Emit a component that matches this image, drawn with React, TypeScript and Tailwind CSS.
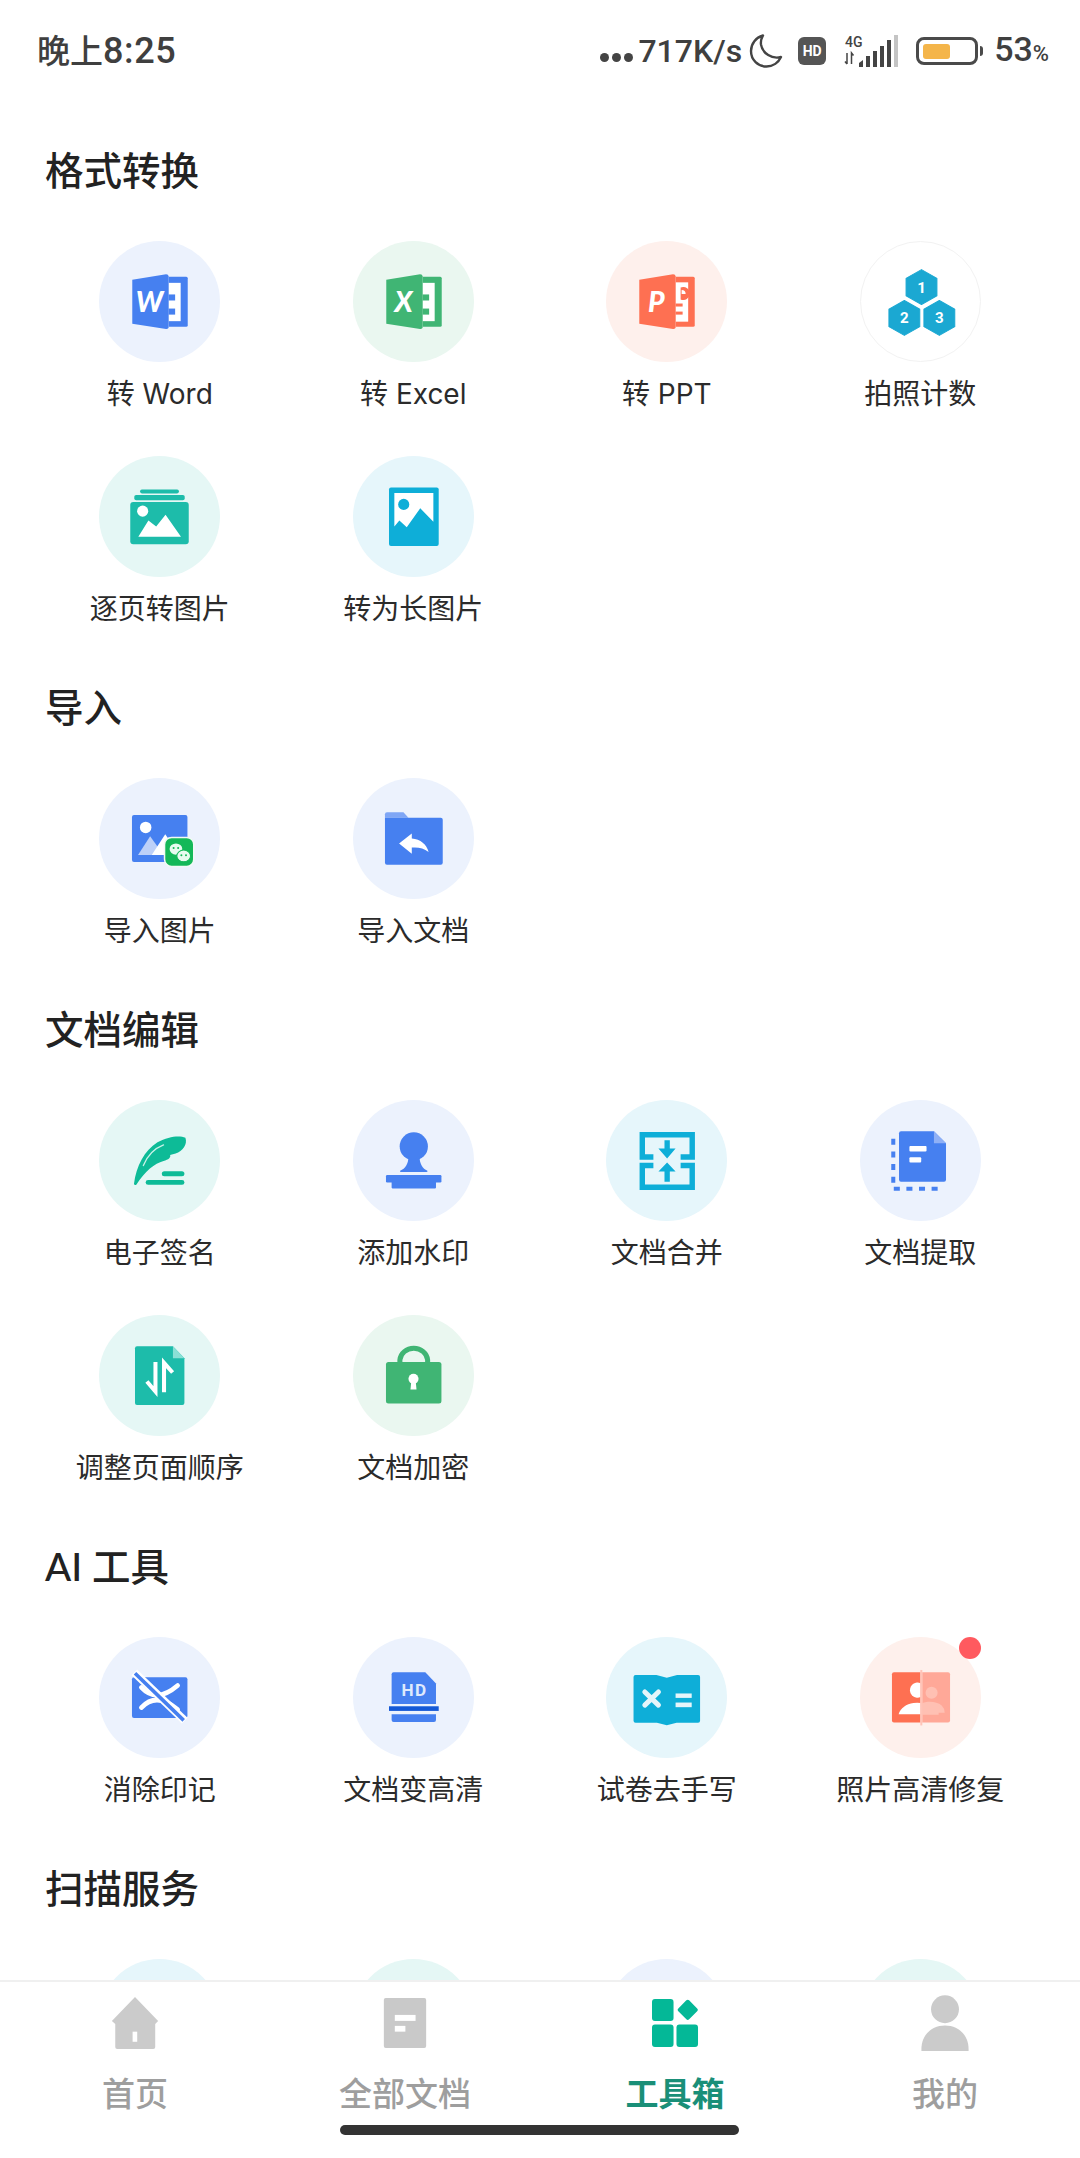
import type { ReactNode } from "react";

const BLUE = "#4680f0";
const GREEN = "#40b574";
const ORANGE = "#fe7052";
const TEAL = "#1dbcaa";
const CYAN = "#0eaed8";
const LOGO_FONT = "Lato, Liberation Sans, sans-serif";

function Icon({ children }: { children?: ReactNode }) {
    return (
        <svg viewBox="0 0 120 120" className="h-[121px] w-[121px]">
            {children}
        </svg>
    );
}

function OfficeBook({ color, letter, pages }: { color: string; letter: string; pages: ReactNode }) {
    return (
        <Icon>
            <path d="M69 35.5H86.5Q88 35.5 88 37V83.5Q88 85 86.5 85H69Z" fill={color} />
            {pages}
            <path d="M33 38.5L66.5 33Q69 33 69 35V85.5Q69 87.5 66.5 87.3L33 82Z" fill={color} />
            <text x="50" y="70" textAnchor="middle" fontFamily={LOGO_FONT} fontSize="28" fontWeight="900" fontStyle="italic" fill="#fff">
                {letter}
            </text>
        </Icon>
    );
}

function RulePages({ color }: { color: string }) {
    return (
        <>
            <rect x="69" y="41.5" width="12" height="38" fill="#fff" />
            <rect x="69" y="53" width="6.5" height="6" fill={color} />
            <rect x="69" y="67" width="6.5" height="6" fill={color} />
        </>
    );
}

const WordIcon = () => <OfficeBook color={BLUE} letter="W" pages={<RulePages color={BLUE} />} />;
const ExcelIcon = () => <OfficeBook color={GREEN} letter="X" pages={<RulePages color={GREEN} />} />;
const PptIcon = () => (
    <OfficeBook
        color={ORANGE}
        letter="P"
        pages={
            <>
                <rect x="69" y="41" width="12.5" height="39" fill="#fff" />
                <path d="M74 46A6.5 6.5 0 1 1 74 58Z" fill={ORANGE} />
                <path d="M75 48.5A4 4 0 0 1 79 52.5H75Z" fill="#fff" />
                <rect x="69" y="62" width="7" height="3" fill={ORANGE} />
                <rect x="69" y="70" width="7" height="3" fill={ORANGE} />
            </>
        }
    />
);

function Hex({ cx, cy, n }: { cx: number; cy: number; n: string }) {
    const rx = 15.3;
    const ry = 17.3;
    return (
        <g>
            <polygon
                points={`${cx},${cy - ry} ${cx + rx},${cy - ry / 2} ${cx + rx},${cy + ry / 2} ${cx},${cy + ry} ${cx - rx},${cy + ry / 2} ${cx - rx},${cy - ry / 2}`}
                fill="#1ba8d2"
                stroke="#1ba8d2"
                strokeLinejoin="round"
            />
            <text x={cx} y={cy + 5.5} textAnchor="middle" fontFamily="Roboto, sans-serif" fontSize="15" fontWeight="700" fill="#fff">
                {n}
            </text>
        </g>
    );
}

const CountIcon = () => (
    <Icon>
        <Hex cx={60} cy={44.7} n="1" />
        <Hex cx={43} cy={75.3} n="2" />
        <Hex cx={77.7} cy={75.3} n="3" />
    </Icon>
);

const PagesIcon = () => (
    <Icon>
        <rect x="40.7" y="33.3" width="38.6" height="3.8" rx="1.8" fill={TEAL} />
        <rect x="35" y="38.7" width="50" height="5.3" rx="1.8" fill={TEAL} />
        <rect x="31" y="45.5" width="58" height="42" rx="3" fill={TEAL} />
        <circle cx="43.3" cy="54.7" r="5.5" fill="#fff" />
        <polygon points="39,80 49,64 56.7,70 66,58.3 81.3,80" fill="#fff" />
    </Icon>
);

const LongImageIcon = () => (
    <Icon>
        <rect x="35.7" y="31.3" width="49.3" height="58" rx="2" fill={CYAN} />
        <polygon points="41,36.7 79.7,36.7 79.7,65.3 66.7,51.7 53.3,70.7 46,64 41,70" fill="#fff" />
        <circle cx="50.3" cy="48" r="5.5" fill={CYAN} />
    </Icon>
);

const ImportImageIcon = () => (
    <Icon>
        <rect x="32.7" y="36.7" width="55" height="46.6" rx="2" fill={BLUE} />
        <circle cx="46.3" cy="49" r="5.7" fill="#fff" />
        <polygon points="38.7,76.3 50.7,57.7 64,76.3" fill="#bdd0f8" />
        <polygon points="52.3,76.3 65.7,55.7 80,76.3" fill="#fff" />
        <rect x="65" y="59" width="29" height="28.7" rx="7" fill="#14b858" stroke="#f2f9f5" strokeWidth="1.5" />
        <ellipse cx="76.3" cy="70.5" rx="6.3" ry="5.6" fill="#e8fbef" />
        <circle cx="74" cy="69.5" r="1" fill="#14b858" />
        <circle cx="78.5" cy="69.5" r="1" fill="#14b858" />
        <ellipse cx="84" cy="77.3" rx="6.8" ry="5.8" fill="#e8fbef" stroke="#14b858" strokeWidth="1" />
        <circle cx="81.7" cy="76.5" r="1" fill="#14b858" />
        <circle cx="86.3" cy="76.5" r="1" fill="#14b858" />
    </Icon>
);

const ImportDocIcon = () => (
    <Icon>
        <path d="M31.7 36Q31.7 34 33.7 34H50L55 39.5H31.7Z" fill="#7fa6f5" />
        <path d="M31.7 39.3H87Q89 39.3 89 41.3V84Q89 86 87 86H33.7Q31.7 86 31.7 84Z" fill={BLUE} />
        <path d="M45.7 65L58.3 55V60C67 60.5 73 66 75 73.3C70 69.5 65 68.5 58.3 69V75Z" fill="#fff" />
    </Icon>
);

const SignIcon = () => (
    <Icon>
        <path d="M34.7 83C37 66 45 50 58 42C69 36 80 35 85.7 37.5C88 44 83 51 76 53L70.5 54.5C71.5 57 69 59 64 60.5C55 63 46 70 37 84Q35 85 34.7 83Z" fill="#0dbb97" />
        <path d="M44 65C48 55 55 48 64 44.5" fill="none" stroke="#c9f1e7" strokeWidth="1.3" strokeLinecap="round" />
        <rect x="62.3" y="70.7" width="22.4" height="5" rx="2.5" fill="#0dbb97" />
        <rect x="46.3" y="79.3" width="38.4" height="4.8" rx="2.4" fill="#0dbb97" />
    </Icon>
);

const StampIcon = () => (
    <Icon>
        <circle cx="60.3" cy="46" r="14" fill={BLUE} />
        <path d="M55 56C55 63 52 68 46.7 70.2Q46 71 47.5 71.3H73Q74.5 71 73.8 70.2C69 68 66 63 66 56Z" fill={BLUE} />
        <rect x="32.7" y="74.3" width="55" height="7.5" rx="1.2" fill={BLUE} />
        <rect x="38.3" y="81" width="44" height="6.7" rx="0.8" fill={BLUE} />
    </Icon>
);

const MergeIcon = () => (
    <Icon>
        <path d="M47 56.5H36V34.5H85.5V56.5H74" fill="none" stroke={CYAN} strokeWidth="5.4" />
        <path d="M47 65H36V86.5H85.5V65H74" fill="none" stroke={CYAN} strokeWidth="5.4" />
        <polygon points="58,40 63.3,40 63.3,48 69,48 60.6,58 52,48 58,48" fill={CYAN} />
        <polygon points="60.6,62 69,71 63.3,71 63.3,81 58,81 58,71 52,71" fill={CYAN} />
    </Icon>
);

const ExtractIcon = () => (
    <Icon>
        <path d="M33 38.5V88H82.7" fill="none" stroke={BLUE} strokeWidth="4" strokeDasharray="6 6.5" />
        <path d="M40.7 31H73.3L85.3 43V79Q85.3 81 83.3 81H40.7Q38.7 81 38.7 79V33Q38.7 31 40.7 31Z" fill={BLUE} />
        <polygon points="73.3,31 85.3,43 73.3,43" fill="#8fb0f6" />
        <rect x="49" y="45.7" width="17" height="5.3" rx="1" fill="#fff" />
        <rect x="49" y="56.7" width="11.7" height="5.3" rx="1" fill="#fff" />
    </Icon>
);

const ReorderIcon = () => (
    <Icon>
        <path d="M37.7 31H73.3L84.7 43V87.3Q84.7 89.3 82.7 89.3H37.7Q35.7 89.3 35.7 87.3V33Q35.7 31 37.7 31Z" fill={TEAL} />
        <polygon points="73.3,31 84.7,43 73.3,43" fill="#8ae0d6" />
        <path d="M56 46.7V76L47.5 66" fill="none" stroke="#fff" strokeWidth="4" />
        <path d="M64.5 76.7V47.5L73 57" fill="none" stroke="#fff" strokeWidth="4" />
    </Icon>
);

const LockIcon = () => (
    <Icon>
        <path d="M46.5 47V44.5A13.8 12.5 0 0 1 74 44.5V47" fill="none" stroke={GREEN} strokeWidth="5" />
        <rect x="32.7" y="46.7" width="55" height="41" rx="2.5" fill={GREEN} />
        <circle cx="60" cy="63.3" r="5" fill="#fff" />
        <path d="M58 64H62L63 74H57Z" fill="#fff" />
    </Icon>
);

const EraseIcon = () => (
    <Icon>
        <rect x="32.7" y="40" width="55" height="40.3" rx="2" fill={BLUE} />
        <path d="M42 50Q57 66 78 48" fill="none" stroke="#fff" strokeWidth="4.6" strokeLinecap="round" />
        <path d="M42 70Q57 54 78 72" fill="none" stroke="#fff" strokeWidth="4.6" strokeLinecap="round" />
        <path d="M35 35L85 83" stroke="#fff" strokeWidth="8" />
        <path d="M35.7 36L84 82.7" stroke={BLUE} strokeWidth="3.6" />
    </Icon>
);

const SharpenIcon = () => (
    <Icon>
        <path d="M40.3 35H71.7L82.3 46V66.5H38.3V37Q38.3 35 40.3 35Z" fill={BLUE} />
        <text x="61" y="59" textAnchor="middle" fontFamily="Roboto, sans-serif" fontSize="17" fontWeight="700" letterSpacing="1.5" fill="#dfe9fd">
            HD
        </text>
        <rect x="35.7" y="68.7" width="49.3" height="4.6" fill="#1559d6" />
        <path d="M38.3 76.7H82.3V82.3Q82.3 84.3 80.3 84.3H40.3Q38.3 84.3 38.3 82.3Z" fill={BLUE} />
    </Icon>
);

const ExamIcon = () => (
    <Icon>
        <path d="M27.3 39.7Q27.3 37.7 29.3 37.7H50L60.3 40.5L70.5 37.7H91.3Q93.3 37.7 93.3 39.7V83Q93.3 85 91.3 85H70L60.3 87.5L50.5 85H29.3Q27.3 85 27.3 83Z" fill={CYAN} />
        <path d="M38.5 54.5L52 67.5M52 54.5L38.5 67.5" stroke="#e5f5fa" strokeWidth="5" strokeLinecap="round" />
        <rect x="69" y="56" width="16" height="4.4" fill="#e5f5fa" />
        <rect x="69" y="65" width="16" height="4.6" fill="#e5f5fa" />
    </Icon>
);

const RestoreIcon = () => (
    <Icon>
        <path d="M33.7 35H60V84.7H33.7Q31.7 84.7 31.7 82.7V37Q31.7 35 33.7 35Z" fill={ORANGE} />
        <path d="M61.7 35H87.3Q89.3 35 89.3 37V82.7Q89.3 84.7 87.3 84.7H61.7Z" fill="#ffa898" />
        <circle cx="71" cy="55.3" r="6" fill="#ffc0b3" />
        <path d="M61 66C66 63.5 76 63.5 81 68Q84 71 84 75H78V77H61Z" fill="#ffc0b3" />
        <path d="M60 45.8A7.5 7.5 0 1 0 60 59.6Z" fill="#fff" />
        <path d="M38.3 76.7C40 70.5 46 66.5 53 65.5Q57 65 60 65.5V76.7Z" fill="#fff" />
        <rect x="59.8" y="32.7" width="2" height="55" fill="#ffc4b8" />
    </Icon>
);

interface Tool {
    label?: string;
    bg: string;
    icon?: ReactNode;
    dot?: boolean;
}

interface Section {
    title: string;
    tools: Tool[];
}

const blueBg = "bg-[#ecf2fd]";
const greenBg = "bg-[#eaf7f0]";
const redBg = "bg-[#fef0ec]";
const tealBg = "bg-[#e5f7f5]";
const cyanBg = "bg-[#e6f6fb]";

const sections: Section[] = [
    {
        title: "格式转换",
        tools: [
            { label: "转 Word", bg: blueBg, icon: <WordIcon /> },
            { label: "转 Excel", bg: greenBg, icon: <ExcelIcon /> },
            { label: "转 PPT", bg: redBg, icon: <PptIcon /> },
            { label: "拍照计数", bg: "bg-white border border-[#f2f2f2]", icon: <CountIcon /> },
            { label: "逐页转图片", bg: tealBg, icon: <PagesIcon /> },
            { label: "转为长图片", bg: cyanBg, icon: <LongImageIcon /> },
        ],
    },
    {
        title: "导入",
        tools: [
            { label: "导入图片", bg: blueBg, icon: <ImportImageIcon /> },
            { label: "导入文档", bg: blueBg, icon: <ImportDocIcon /> },
        ],
    },
    {
        title: "文档编辑",
        tools: [
            { label: "电子签名", bg: tealBg, icon: <SignIcon /> },
            { label: "添加水印", bg: blueBg, icon: <StampIcon /> },
            { label: "文档合并", bg: cyanBg, icon: <MergeIcon /> },
            { label: "文档提取", bg: blueBg, icon: <ExtractIcon /> },
            { label: "调整页面顺序", bg: tealBg, icon: <ReorderIcon /> },
            { label: "文档加密", bg: greenBg, icon: <LockIcon /> },
        ],
    },
    {
        title: "AI 工具",
        tools: [
            { label: "消除印记", bg: blueBg, icon: <EraseIcon /> },
            { label: "文档变高清", bg: blueBg, icon: <SharpenIcon /> },
            { label: "试卷去手写", bg: cyanBg, icon: <ExamIcon /> },
            { label: "照片高清修复", bg: redBg, icon: <RestoreIcon />, dot: true },
        ],
    },
    {
        title: "扫描服务",
        tools: [{ bg: cyanBg }, { bg: tealBg }, { bg: blueBg }, { bg: tealBg }],
    },
];

function ToolItem({ tool }: { tool: Tool }) {
    return (
        <div className="flex h-[215px] flex-col items-center">
            <div className="relative h-[121px] w-[121px]">
                <div className={`h-[121px] w-[121px] overflow-hidden rounded-full ${tool.bg}`}>{tool.icon}</div>
                {tool.dot && <span className="absolute left-[99px] top-0 h-[22px] w-[22px] rounded-full bg-[#ff5a5f]" />}
            </div>
            <span className="mt-[12px] whitespace-nowrap font-['Inter','Noto_Sans_CJK_SC',sans-serif] text-[28px] leading-[40px] text-[#2b2b2b]">{tool.label}</span>
        </div>
    );
}

function SignalIcon() {
    return (
        <svg viewBox="0 0 56 34" className="h-[34px] w-[56px]">
            <text x="1" y="13" fontFamily="Roboto, sans-serif" fontSize="14" fontWeight="500" fill="#444">
                4G
            </text>
            <path d="M3 19V30M1 27.5L3 30M7.5 30V19L9.5 21.5" fill="none" stroke="#444" strokeWidth="1.5" />
            <path d="M15 29L19 26V33H15Z" fill="#444" />
            <rect x="22" y="22" width="4" height="11" fill="#444" />
            <rect x="29" y="17" width="4" height="16" fill="#444" />
            <rect x="36" y="12" width="4" height="21" fill="#444" />
            <rect x="43" y="6" width="4" height="27" fill="#444" />
            <rect x="50" y="1" width="4" height="32" fill="#c4c4c4" />
        </svg>
    );
}

function StatusBar() {
    return (
        <div className="flex h-[102px] shrink-0 items-center pl-[37px] pr-[31px] text-[#3f3f3f]">
            <span className="font-['Roboto','Noto_Sans_CJK_SC',sans-serif] text-[33px] font-medium leading-[40px]">
                晚上<span className="text-[36px] tracking-[0.6px]">8:25</span>
            </span>
            <div className="ml-auto flex items-center font-['Roboto',sans-serif]">
                <div className="mt-[12px] flex gap-[3px]">
                    <span className="h-[9px] w-[9px] rounded-full bg-[#444]" />
                    <span className="h-[9px] w-[9px] rounded-full bg-[#444]" />
                    <span className="h-[9px] w-[9px] rounded-full bg-[#444]" />
                </div>
                <span className="ml-[5px] text-[32px] font-medium leading-[40px]">717K/s</span>
                <svg viewBox="0 0 36 36" className="ml-[6px] h-[36px] w-[36px]">
                    <path d="M15 2.5C8 4.5 3 10.5 3 18C3 27 10 33.5 18.5 33.5C25 33.5 30.5 29.5 33 24C24 26.5 14.5 20.5 13 11.5C12.5 8 13.5 5 15 2.5Z" fill="none" stroke="#444" strokeWidth="2.4" strokeLinejoin="round" />
                </svg>
                <div className="ml-[14px] flex h-[28px] w-[28px] items-center justify-center rounded-[6px] bg-[#555] font-['Roboto',sans-serif] text-[14px] font-bold leading-none text-white">
                    HD
                </div>
                <div className="ml-[18px] flex">
                    <SignalIcon />
                </div>
                <div className="ml-[16px] flex h-[28px] w-[62px] items-center rounded-[8px] border-[3px] border-[#4a4a4a] pl-[4px]">
                    <div className="h-[15px] w-[27px] rounded-[3px] bg-[#f4b54a]" />
                </div>
                <span className="ml-[2px] h-[10px] w-[3px] rounded-r-full bg-[#4a4a4a]" />
                <span className="ml-[11px] text-[34px] font-medium leading-[40px]">
                    53<span className="text-[22px]">%</span>
                </span>
            </div>
        </div>
    );
}

function TabBar() {
    return (
        <div className="h-[178px] shrink-0 border-t-2 border-[#f0f0f0] bg-white pt-[13px]">
            <div className="grid grid-cols-4 text-[#9e9e9e]">
                <div className="flex flex-col items-center">
                    <div className="flex h-[56px] items-center">
                        <svg viewBox="0 0 48 54" className="h-[52px] w-[48px]">
                            <path d="M24 0L48 25L45 28V52Q45 54 43 54H5.5Q3.5 54 3.5 52V28L0 25Z" fill="#cbcbcb" />
                            <rect x="21.5" y="36" width="4.8" height="10.5" fill="#fff" />
                        </svg>
                    </div>
                    <span className="mt-[22px] text-[33px] font-medium leading-[40px]">首页</span>
                </div>
                <div className="flex flex-col items-center">
                    <div className="flex h-[56px] items-center">
                        <svg viewBox="0 0 44 52" className="h-[50px] w-[44px]">
                            <rect width="44" height="52" rx="2" fill="#c9c9c9" />
                            <rect x="11.4" y="17.6" width="21.6" height="6.2" fill="#fff" />
                            <rect x="11.4" y="29" width="11" height="6" fill="#fff" />
                        </svg>
                    </div>
                    <span className="mt-[22px] text-[33px] font-medium leading-[40px]">全部文档</span>
                </div>
                <div className="flex flex-col items-center">
                    <div className="flex h-[56px] items-center">
                        <svg viewBox="0 0 48 49" className="h-[48px] w-[47px]">
                            <rect width="22" height="22.4" rx="3" fill="#04b897" />
                            <rect x="28.7" y="3.2" width="15.6" height="15.6" rx="2" transform="rotate(45 36.5 11)" fill="#04b897" />
                            <rect y="26" width="22" height="23" rx="3" fill="#04b897" />
                            <rect x="25" y="26" width="22" height="23" rx="3" fill="#04b897" />
                        </svg>
                    </div>
                    <span className="mt-[22px] text-[33px] font-bold leading-[40px] text-[#1a8f78]">工具箱</span>
                </div>
                <div className="flex flex-col items-center">
                    <div className="flex h-[56px] items-center">
                        <svg viewBox="0 0 48 57" className="h-[56px] w-[48px]">
                            <circle cx="24" cy="14.5" r="14.2" fill="#cbcbcb" />
                            <path d="M0 55C0 41 10 31 24 31C38 31 48 41 48 55V57H0Z" fill="#cbcbcb" />
                        </svg>
                    </div>
                    <span className="mt-[22px] text-[33px] font-medium leading-[40px]">我的</span>
                </div>
            </div>
            <div className="ml-[340px] mt-[12px] h-[10px] w-[399px] rounded-full bg-[#333]" />
        </div>
    );
}

export default function App() {
    return (
        <div className="flex h-[2158px] w-[1080px] flex-col overflow-hidden bg-white font-['Lato','Noto_Sans_CJK_SC',sans-serif]">
            <StatusBar />
            <main className="min-h-0 flex-1 overflow-hidden pt-[39px]">
                {sections.map((section) => (
                    <section key={section.title} className="mb-[7px]">
                        <h2 className="mb-[40px] flex h-[60px] items-center pl-[45px] text-[38.5px] font-medium text-[#222]">{section.title}</h2>
                        <div className="grid grid-cols-4 px-[33px]">
                            {section.tools.map((tool, i) => (
                                <ToolItem key={i} tool={tool} />
                            ))}
                        </div>
                    </section>
                ))}
            </main>
            <TabBar />
        </div>
    );
}
